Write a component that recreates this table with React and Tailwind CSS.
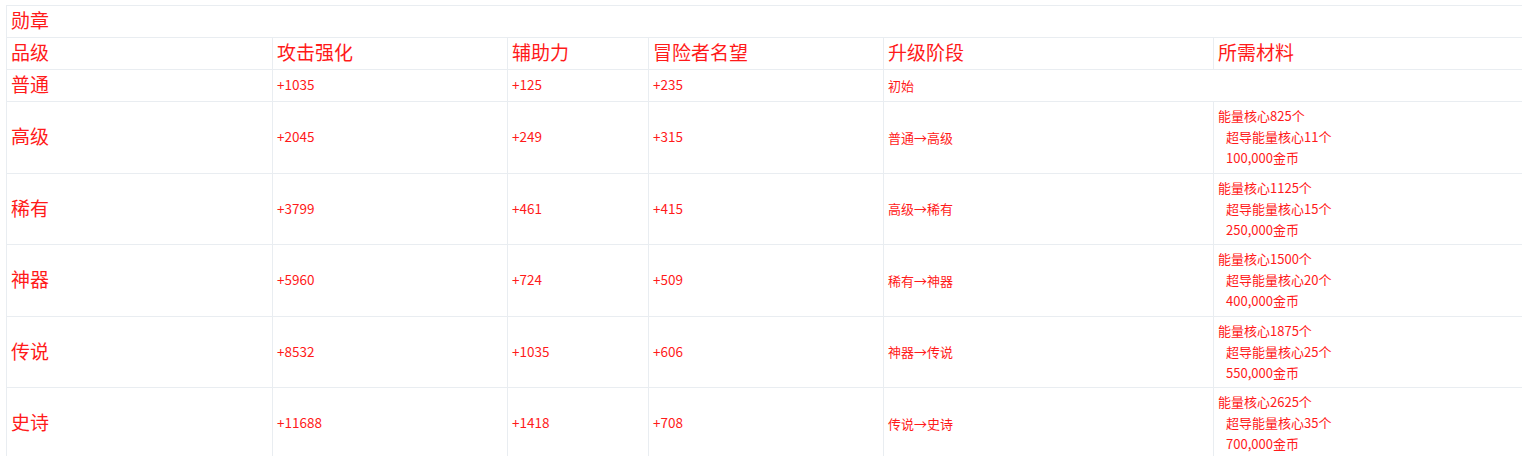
import React from "react";

const rows = [
  { q: "普通", a: "+1035", b: "+125", c: "+235", s: "初始", m: null, h: "h-[32px]" },
  { q: "高级", a: "+2045", b: "+249", c: "+315", s: "普通→高级", m: ["能量核心825个", "超导能量核心11个", "100,000金币"], h: "h-[72px]" },
  { q: "稀有", a: "+3799", b: "+461", c: "+415", s: "高级→稀有", m: ["能量核心1125个", "超导能量核心15个", "250,000金币"], h: "h-[71px]" },
  { q: "神器", a: "+5960", b: "+724", c: "+509", s: "稀有→神器", m: ["能量核心1500个", "超导能量核心20个", "400,000金币"], h: "h-[72px]" },
  { q: "传说", a: "+8532", b: "+1035", c: "+606", s: "神器→传说", m: ["能量核心1875个", "超导能量核心25个", "550,000金币"], h: "h-[71px]" },
  { q: "史诗", a: "+11688", b: "+1418", c: "+708", s: "传说→史诗", m: ["能量核心2625个", "超导能量核心35个", "700,000金币"], h: "h-[72px]" },
];

const td = "border border-[#e9edf1] px-[4px] align-middle";
const big = `${td} text-[19px] leading-none pb-[4px]`;
const num = `${td} text-[13.5px] leading-none pb-[1px]`;

export default function App() {
  return (
    <div
      className="w-[1522px] h-[456px] overflow-hidden bg-white pt-[5px] pl-[6px] text-[#ff1a1a]"
      style={{ fontFamily: '"Noto Sans CJK SC", "Noto Sans", sans-serif' }}
    >
      <table className="table-fixed border-collapse w-[1540px]">
        <colgroup>
          <col className="w-[266px]" />
          <col className="w-[235px]" />
          <col className="w-[141px]" />
          <col className="w-[235px]" />
          <col className="w-[330px]" />
          <col className="w-[333px]" />
        </colgroup>
        <tbody>
          <tr className="h-[32px]">
            <td colSpan={6} className={big}>勋章</td>
          </tr>
          <tr className="h-[32px]">
            {["品级", "攻击强化", "辅助力", "冒险者名望", "升级阶段", "所需材料"].map((t) => (
              <td key={t} className={big}>{t}</td>
            ))}
          </tr>
          {rows.map((r) => (
            <tr key={r.q} className={r.h}>
              <td className={big}>{r.q}</td>
              <td className={num}>{r.a}</td>
              <td className={num}>{r.b}</td>
              <td className={num}>{r.c}</td>
              <td colSpan={r.m ? 1 : 2} className={`${td} text-[13px] leading-none pb-[1px]`}>{r.s}</td>
              {r.m && (
                <td className={`${td} text-[13px] leading-[21px] pb-[2px]`}>
                  <div className="flex flex-col">
                    <span>{r.m[0]}</span>
                    <span className="pl-[8px]">{r.m[1]}</span>
                    <span className="pl-[8px]">{r.m[2]}</span>
                  </div>
                </td>
              )}
            </tr>
          ))}
        </tbody>
      </table>
    </div>
  );
}
